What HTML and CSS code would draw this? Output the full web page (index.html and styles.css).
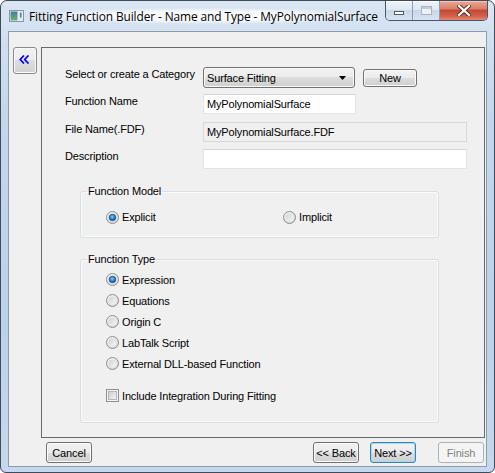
FILE: index.html
```html
<!DOCTYPE html>
<html>
<head>
<meta charset="utf-8">
<title>Fitting Function Builder</title>
<link rel="stylesheet" href="styles.css">
</head>
<body>
<svg class="defs" width="0" height="0" aria-hidden="true">
  <defs>
    <radialGradient id="rOuter" cx="40%" cy="35%" r="70%">
      <stop offset="0" stop-color="#ffffff"/>
      <stop offset="1" stop-color="#d4d4d4"/>
    </radialGradient>
    <linearGradient id="rInner" x1="0" y1="0" x2="1" y2="1">
      <stop offset="0" stop-color="#cfd0d2"/>
      <stop offset="1" stop-color="#f8f8f8"/>
    </linearGradient>
    <radialGradient id="rDot" cx="45%" cy="40%" r="60%">
      <stop offset="0" stop-color="#7fd0fb"/>
      <stop offset="0.55" stop-color="#2a86cf"/>
      <stop offset="1" stop-color="#0f4f93"/>
    </radialGradient>
    <linearGradient id="cInner" x1="0" y1="0" x2="1" y2="1">
      <stop offset="0" stop-color="#cbcdd1"/>
      <stop offset="1" stop-color="#f6f6f6"/>
    </linearGradient>
    <linearGradient id="icoL" x1="0" y1="0" x2="0" y2="1">
      <stop offset="0" stop-color="#3f7f95"/>
      <stop offset="1" stop-color="#6fae7c"/>
    </linearGradient>
  </defs>
</svg>
<div class="window">
  <div class="titlebar">
    <svg class="app-icon" width="15" height="12" viewBox="0 0 15 12">
      <rect x="0.5" y="0.5" width="14" height="11" fill="#eef3f8" stroke="#8a96a2"/>
      <rect x="1.5" y="1.5" width="7" height="9" fill="url(#icoL)"/>
      <rect x="9.5" y="1.5" width="4" height="9" fill="#dbe7f1"/>
      <rect x="11" y="2.5" width="1.5" height="5" fill="#5d7a96"/>
    </svg>
    <div class="title">Fitting Function Builder - Name and Type - MyPolynomialSurface</div>
    <div class="caption">
      <div class="cap cap-min"><span class="min-glyph"></span></div>
      <div class="cap cap-max"><span class="max-glyph"></span></div>
      <div class="cap cap-close">
        <svg width="14" height="11" viewBox="0 0 14 11">
          <path d="M2 1 L12 10 M12 1 L2 10" stroke="#5a2a22" stroke-width="4" stroke-linecap="square"/>
          <path d="M2 1 L12 10 M12 1 L2 10" stroke="#ffffff" stroke-width="2.2" stroke-linecap="square"/>
        </svg>
      </div>
    </div>
  </div>

  <div class="client">
    <div class="body-row">
      <button class="collapse" type="button">
        <svg width="11" height="9" viewBox="0 0 11 9">
          <path d="M5 0.5 L1.2 4.5 L5 8.5 M9.5 0.5 L5.7 4.5 L9.5 8.5" fill="none" stroke="#0000ff" stroke-width="1.7"/>
        </svg>
      </button>
      <div class="panel">
        <div class="row row-cat">
          <div class="lbl">Select or create a Category</div>
          <div class="combo">
            <span>Surface Fitting</span>
            <svg class="arrow" width="7" height="4" viewBox="0 0 7 4"><path d="M0 0 H7 L3.5 4 Z" fill="#000"/></svg>
          </div>
          <button class="btn btn-new" type="button">New</button>
        </div>
        <div class="row row-name">
          <div class="lbl">Function Name</div>
          <div class="field field-short">MyPolynomialSurface</div>
        </div>
        <div class="row row-file">
          <div class="lbl">File Name(.FDF)</div>
          <div class="field field-long field-ro">MyPolynomialSurface.FDF</div>
        </div>
        <div class="row row-desc">
          <div class="lbl">Description</div>
          <div class="field field-long"></div>
        </div>

        <fieldset class="group group-model">
          <legend>Function Model</legend>
          <div class="model-row">
            <div class="opt opt-wide">
              <svg class="radio" width="13" height="13" viewBox="0 0 13 13"><circle cx="6.5" cy="6.5" r="6" fill="url(#rOuter)" stroke="#8c8e90"/><circle cx="6.5" cy="6.5" r="4" fill="url(#rInner)"/><circle cx="6.5" cy="6.5" r="3.3" fill="url(#rDot)" stroke="#1b4e86" stroke-width="0.7"/></svg>
              <span>Explicit</span>
            </div>
            <div class="opt">
              <svg class="radio" width="13" height="13" viewBox="0 0 13 13"><circle cx="6.5" cy="6.5" r="6" fill="url(#rOuter)" stroke="#8c8e90"/><circle cx="6.5" cy="6.5" r="4" fill="url(#rInner)"/></svg>
              <span>Implicit</span>
            </div>
          </div>
        </fieldset>

        <fieldset class="group group-type">
          <legend>Function Type</legend>
          <div class="type-list">
            <div class="opt type-opt">
              <svg class="radio" width="13" height="13" viewBox="0 0 13 13"><circle cx="6.5" cy="6.5" r="6" fill="url(#rOuter)" stroke="#8c8e90"/><circle cx="6.5" cy="6.5" r="4" fill="url(#rInner)"/><circle cx="6.5" cy="6.5" r="3.3" fill="url(#rDot)" stroke="#1b4e86" stroke-width="0.7"/></svg>
              <span>Expression</span>
            </div>
            <div class="opt type-opt">
              <svg class="radio" width="13" height="13" viewBox="0 0 13 13"><circle cx="6.5" cy="6.5" r="6" fill="url(#rOuter)" stroke="#8c8e90"/><circle cx="6.5" cy="6.5" r="4" fill="url(#rInner)"/></svg>
              <span>Equations</span>
            </div>
            <div class="opt type-opt">
              <svg class="radio" width="13" height="13" viewBox="0 0 13 13"><circle cx="6.5" cy="6.5" r="6" fill="url(#rOuter)" stroke="#8c8e90"/><circle cx="6.5" cy="6.5" r="4" fill="url(#rInner)"/></svg>
              <span>Origin C</span>
            </div>
            <div class="opt type-opt">
              <svg class="radio" width="13" height="13" viewBox="0 0 13 13"><circle cx="6.5" cy="6.5" r="6" fill="url(#rOuter)" stroke="#8c8e90"/><circle cx="6.5" cy="6.5" r="4" fill="url(#rInner)"/></svg>
              <span>LabTalk Script</span>
            </div>
            <div class="opt type-opt">
              <svg class="radio" width="13" height="13" viewBox="0 0 13 13"><circle cx="6.5" cy="6.5" r="6" fill="url(#rOuter)" stroke="#8c8e90"/><circle cx="6.5" cy="6.5" r="4" fill="url(#rInner)"/></svg>
              <span>External DLL-based Function</span>
            </div>
            <div class="opt type-opt check-opt">
              <svg class="check" width="13" height="13" viewBox="0 0 13 13"><rect x="0.5" y="0.5" width="12" height="12" fill="#f5f5f5" stroke="#8e8f8f"/><rect x="2.5" y="2.5" width="8" height="8" fill="url(#cInner)" stroke="#b3b6ba"/></svg>
              <span>Include Integration During Fitting</span>
            </div>
          </div>
        </fieldset>
      </div>
    </div>
    <div class="footer">
      <button class="btn" type="button">Cancel</button>
      <button class="btn btn-back" type="button">&lt;&lt; Back</button>
      <button class="btn btn-next" type="button">Next &gt;&gt;</button>
      <button class="btn btn-finish" type="button" disabled>Finish</button>
    </div>
  </div>
</div>
</body>
</html>
```

FILE: styles.css
```css
* { box-sizing: border-box; }
html, body { margin: 0; padding: 0; }
body {
  width: 495px;
  height: 473px;
  overflow: hidden;
  background: #ffffff;
  font-family: "Liberation Sans", Arial, sans-serif;
  font-size: 11px;
  letter-spacing: -0.15px;
  color: #000;
}
.defs { display: block; width: 0; height: 0; overflow: hidden; }

.window {
  width: 495px;
  height: 473px;
  border: 1px solid #3f4b59;
  border-radius: 7px 7px 6px 6px;
  background: linear-gradient(180deg, #dbe6f3 0, #d3e1f1 30px, #c3d6ec 120px, #bcd1ea 70%, #c6d8ed 100%);
  display: flex;
  flex-direction: column;
  overflow: hidden;
}

.titlebar {
  height: 30px;
  display: flex;
  align-items: flex-start;
  flex: none;
}
.app-icon { margin: 9px 0 0 8px; flex: none; }
.title {
  margin: 7px 0 0 3px;
  font-family: "Open Sans", "Noto Sans", sans-serif;
  font-size: 11.9px;
  letter-spacing: -0.1px;
  line-height: 16px;
  white-space: nowrap;
  color: #000;
  background: radial-gradient(ellipse at center, rgba(255,255,255,0.85) 40%, rgba(255,255,255,0) 72%);
  padding: 0 2px;
}
.caption {
  margin-left: auto;
  margin-right: 6px;
  display: flex;
  height: 20px;
  border: 1px solid #4a5666;
  border-top: 0;
  border-radius: 0 0 5px 5px;
  overflow: hidden;
  flex: none;
}
.cap {
  height: 19px;
  display: flex;
  align-items: center;
  justify-content: center;
}
.cap-min, .cap-max {
  width: 27px;
  background: linear-gradient(180deg, #eef3f9 0, #dfe8f3 45%, #c9d7e8 50%, #d6e3f2 100%);
  border-right: 1px solid #8d9bb0;
  box-shadow: inset 0 1px 0 #ffffff;
}
.min-glyph {
  width: 10px;
  height: 4px;
  margin-top: 5px;
  background: #ffffff;
  border: 1px solid #4e5a6b;
}
.max-glyph {
  width: 11px;
  height: 9px;
  border: 1px solid #a9b4c2;
  box-shadow: inset 0 2px 0 #c4ccd6;
  background: #eef2f7;
}
.cap-close {
  width: 47px;
  background: linear-gradient(180deg, #e9a99b 0, #d97f6c 40%, #c44a32 50%, #d3614a 80%, #e28a74 100%);
  box-shadow: inset 0 1px 0 #f3c7bd;
}

.client {
  margin: 0 7px;
  height: 436px;
  background: #f0f0f0;
  border: 1px solid #8d9bab;
  display: flex;
  flex-direction: column;
  flex: none;
}
.body-row {
  display: flex;
  align-items: flex-start;
  margin-top: 15px;
}
.collapse {
  margin: 0 0 0 4px;
  width: 24px;
  height: 27px;
  padding: 7px 0 0 5px;
  display: flex;
  align-items: flex-start;
  justify-content: flex-start;
  border: 1px solid #8a8a8a;
  border-radius: 3px;
  background: linear-gradient(180deg, #f2f2f2 0, #ebebeb 50%, #dddddd 50%, #d2d2d2 100%);
  box-shadow: inset 0 0 0 1px #fbfbfb;
}
.panel {
  margin-left: 4px;
  width: 444px;
  height: 391px;
  border: 1px solid #6a6a6a;
  padding: 19px 0 0 23px;
}

.row { display: flex; align-items: flex-start; }
.row-name { margin-top: 6px; }
.row-file { margin-top: 8px; }
.row-desc { margin-top: 7px; }
.lbl { width: 138px; line-height: 14px; white-space: nowrap; flex: none; }

.combo {
  width: 152px;
  height: 21px;
  border: 1px solid #707070;
  border-radius: 3px;
  background: linear-gradient(180deg, #f2f2f2 0, #ebebeb 50%, #dddddd 50%, #cfcfcf 100%);
  box-shadow: inset 0 0 0 1px #fafafa;
  display: flex;
  align-items: center;
  padding: 0 4px 0 3px;
  line-height: 14px;
}
.combo span { flex: 1; }
.arrow { margin-right: 4px; margin-top: 1px; }

.btn {
  width: 46px;
  height: 21px;
  border: 1px solid #707070;
  border-radius: 3px;
  background: linear-gradient(180deg, #f2f2f2 0, #ebebeb 50%, #dddddd 50%, #cfcfcf 100%);
  box-shadow: inset 0 0 0 1px #fcfcfc;
  font: inherit;
  letter-spacing: inherit;
  color: #000;
  padding: 0;
  line-height: 14px;
}
.btn-new { width: 54px; height: 18px; margin: 2px 0 0 8px; }

.field {
  height: 20px;
  border: 1px solid #e2e3ea;
  border-top-color: #d3d5da;
  background: #ffffff;
  padding: 2px 3px 0 3px;
  line-height: 14px;
  white-space: nowrap;
}
.field-short { width: 153px; }
.field-long { width: 264px; }
.field-ro { background: #f0f0f0; border-color: #d9d9d9; }

.group {
  margin: 15px 0 0 15px;
  width: 359px;
  border: 1px solid #d5dfe5;
  border-radius: 3px;
  box-shadow: inset 0 0 0 1px #fbfbfb;
  padding: 0;
  min-inline-size: 0;
}
.group legend {
  margin-left: 6px;
  padding: 0 1px;
  line-height: 14px;
}
.group-type { margin-top: 14px; }

.model-row {
  display: flex;
  padding: 12px 0 13px 25px;
}
.opt {
  display: flex;
  align-items: center;
  line-height: 14px;
  white-space: nowrap;
}
.opt-wide { width: 177px; }
.radio, .check { flex: none; margin-right: 3px; }

.type-list { padding: 3px 0 16px 25px; }
.type-opt { height: 21px; }
.check-opt { margin-top: 11px; }

.footer {
  display: flex;
  align-items: flex-start;
  margin-top: 4px;
  padding: 0 2px 0 37px;
}
.btn-back { margin-left: auto; }
.btn-next {
  margin-left: 11px;
  border-color: #3c7fb1;
  box-shadow: inset 0 0 0 1px #9fdcf8;
}
.btn-finish {
  margin-left: 22px;
  border-color: #adb2b5;
  background: #f4f4f4;
  color: #838383;
  box-shadow: none;
}
```
